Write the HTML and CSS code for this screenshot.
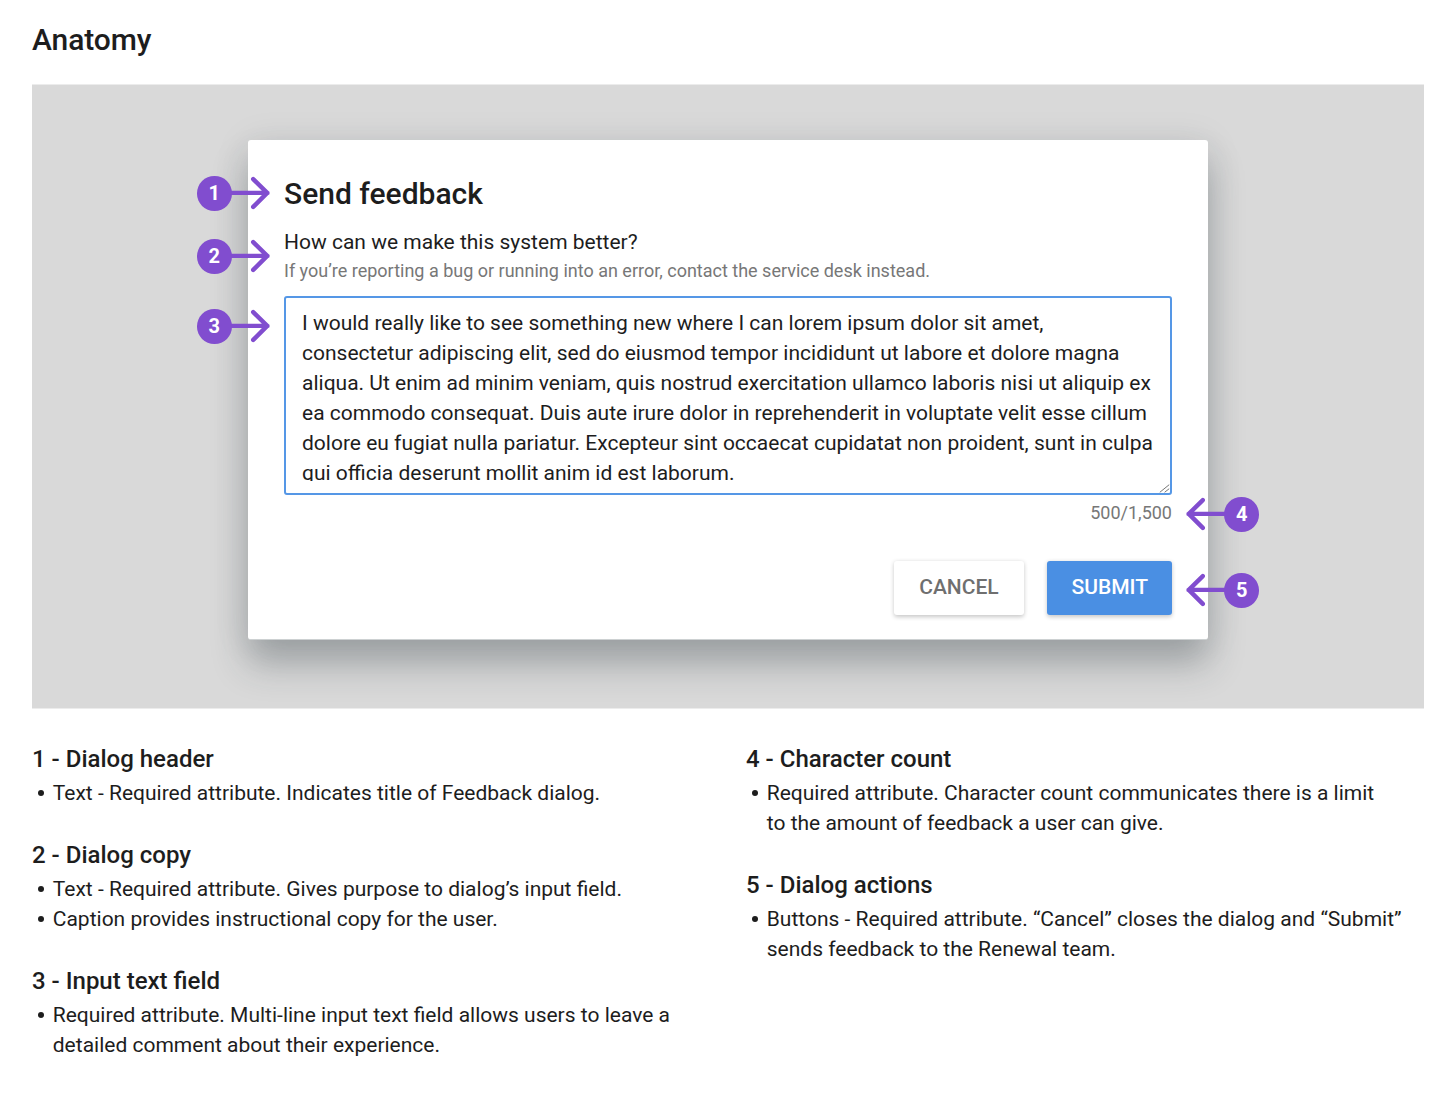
FILE: index.html
```
<!DOCTYPE html>
<html lang="en">
<head>
<meta charset="utf-8">
<title>Anatomy</title>
<link rel="stylesheet" href="styles.css">
</head>
<body>
<svg class="defs" aria-hidden="true">
  <symbol id="arrow" viewBox="0 0 74 36">
    <path d="M30 16.9H70.5M56.2 3.1L70.2 16.9L56.2 30.9"/>
  </symbol>
</svg>
<main class="page">
  <h1 class="page-title">Anatomy</h1>

  <figure class="stage">
    <section class="dialog">
      <h2 class="dialog-title">Send feedback</h2>
      <p class="dialog-question">How can we make this system better?</p>
      <p class="dialog-caption">If you’re reporting a bug or running into an error, contact the service desk instead.</p>
      <div class="field">
        <p class="field-text">I would really like to see something new where I can lorem ipsum dolor sit amet, consectetur adipiscing elit, sed do eiusmod tempor incididunt ut labore et dolore magna aliqua. Ut enim ad minim veniam, quis nostrud exercitation ullamco laboris nisi ut aliquip ex ea commodo consequat. Duis aute irure dolor in reprehenderit in voluptate velit esse cillum dolore eu fugiat nulla pariatur. Excepteur sint occaecat cupidatat non proident, sunt in culpa qui officia deserunt mollit anim id est laborum.</p>
        <svg class="grip" viewBox="0 0 11 9"><path d="M.8 8.3L10.2 .7M5.6 8.3L10.2 4.7"/></svg>
      </div>
      <p class="count">500/1,500</p>
      <div class="actions">
        <button class="btn btn-cancel" type="button">CANCEL</button>
        <button class="btn btn-submit" type="button">SUBMIT</button>
      </div>
    </section>

    <div class="pin pin-1"><svg><use href="#arrow"/></svg><span class="num">1</span></div>
    <div class="pin pin-2"><svg><use href="#arrow"/></svg><span class="num">2</span></div>
    <div class="pin pin-3"><svg><use href="#arrow"/></svg><span class="num">3</span></div>
    <div class="pin pin-left pin-4"><svg><use href="#arrow"/></svg><span class="num">4</span></div>
    <div class="pin pin-left pin-5"><svg><use href="#arrow"/></svg><span class="num">5</span></div>
  </figure>

  <div class="notes">
    <div class="column">
      <section>
        <h3 class="note-title">1 - Dialog header</h3>
        <ul class="note-list"><li>Text - Required attribute. Indicates title of Feedback dialog.</li></ul>
      </section>
      <section>
        <h3 class="note-title">2 - Dialog copy</h3>
        <ul class="note-list">
          <li>Text - Required attribute. Gives purpose to dialog’s input field.</li>
          <li>Caption provides instructional copy for the user.</li>
        </ul>
      </section>
      <section>
        <h3 class="note-title">3 - Input text field</h3>
        <ul class="note-list"><li>Required attribute. Multi-line input text field allows users to leave a detailed comment about their experience.</li></ul>
      </section>
    </div>
    <div class="column">
      <section>
        <h3 class="note-title">4 - Character count</h3>
        <ul class="note-list note-narrow"><li>Required attribute. Character count communicates there is a limit to the amount of feedback a user can give.</li></ul>
      </section>
      <section>
        <h3 class="note-title">5 - Dialog actions</h3>
        <ul class="note-list"><li>Buttons - Required attribute. “Cancel” closes the dialog and “Submit” sends feedback to the Renewal team.</li></ul>
      </section>
    </div>
  </div>
</main>
</body>
</html>
```
FILE: styles.css
```
* { box-sizing: border-box; margin: 0; padding: 0; }

body {
  background: #fff;
  color: #1d1d1d;
  font: 400 21px/30px Roboto, "Liberation Sans", sans-serif;
}

.defs { display: block; width: 0; height: 0; }

.page { width: 1424px; padding: 22px 0 0 32px; }

.page-title, .dialog-title { font-weight: 500; font-size: 30px; line-height: 36px; }
.page-title { margin-bottom: 26px; letter-spacing: -.1px; }

.stage {
  position: relative;
  height: 625px;
  padding: 55px 216px 0;
  background: #d9d9d9;
  border: solid #ececec;
  border-width: 1px 0;
  overflow: hidden;
}

.dialog {
  height: 500px;
  padding: 36px 36px 24px;
  display: flex;
  flex-direction: column;
  background: #fff;
  border-bottom: 1px solid #cdd1d2;
  border-radius: 3px;
  box-shadow: 0 24px 36px rgba(38, 50, 56, .3), 0 3px 36px rgba(38, 50, 56, .1);
}

.dialog-question { margin-top: 15px; }
.dialog-caption { margin-top: 2px; color: #777; font-size: 18px; line-height: 24px; }

.field {
  position: relative;
  height: 199px;
  margin-top: 13px;
  padding: 10px 16px;
  border: 2px solid #5597e6;
  border-radius: 3px;
  background: #fff;
}
.field-text { height: 173px; overflow: hidden; }
.grip { position: absolute; right: 0; bottom: 0; width: 11px; height: 9px; fill: none; stroke: #777; stroke-width: 1; }

.count { margin-top: 6px; color: #777; font-size: 18px; line-height: 24px; text-align: right; }

.actions { display: flex; justify-content: flex-end; gap: 23.5px; margin-top: auto; }
.btn {
  height: 54px;
  padding: 0 24px 2px;
  border: 0;
  border-radius: 3px;
  font: 500 21px/30px Roboto, "Liberation Sans", sans-serif;
  box-shadow: 0 1.5px 4px rgba(0, 0, 0, .22);
}
.btn-cancel { padding: 0 25.3px 2px; background: #fff; color: #6f6f6f; }
.btn-submit { background: #4a8fe3; color: #fff; }

/* Callouts pinned over the dialog edge */
.pin { position: absolute; left: 165px; width: 74px; height: 35px; display: flex; }
.pin svg {
  position: absolute;
  inset: 0;
  width: 74px;
  height: 36px;
  fill: none;
  stroke: #814dcf;
  stroke-width: 4.4;
  stroke-linecap: round;
  stroke-linejoin: round;
}
.num {
  position: relative;
  width: 34.6px;
  height: 34.6px;
  border-radius: 50%;
  background: #814dcf;
  color: #fff;
  font-weight: 700;
  font-size: 20px;
  line-height: 34px;
  text-align: center;
}
.pin-left { left: 1153px; justify-content: flex-end; }
.pin-left svg { transform: scaleX(-1); }
.pin-1 { top: 91px; }
.pin-2 { top: 154px; }
.pin-3 { top: 224.4px; }
.pin-4 { top: 412px; }
.pin-5 { top: 488.4px; }

.notes { display: grid; grid-template-columns: 714px 1fr; padding-top: 32px; }
.column { display: flex; flex-direction: column; gap: 29px; }
.note-title { font-weight: 500; font-size: 24px; line-height: 36px; }
.note-list { margin-top: 1px; list-style: none; max-width: 664px; }
.note-narrow { max-width: 640px; }
.note-list li { display: flex; }
.note-list li::before {
  content: "";
  flex: none;
  width: 6.4px;
  height: 6.4px;
  margin: 11.7px 8.6px 0 5.8px;
  border-radius: 50%;
  background: #1d1d1d;
}
```
